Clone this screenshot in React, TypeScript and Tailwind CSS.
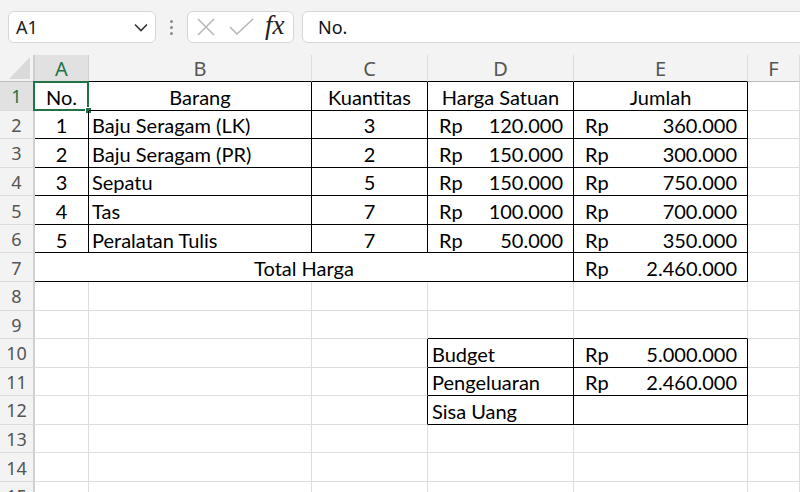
import React from "react";

const cellFont = { fontFamily: "Lato, 'Liberation Sans', sans-serif" };

type CellProps = {
  r?: boolean;
  b?: boolean;
  className?: string;
  children?: React.ReactNode;
  span4?: boolean;
};

function Cell({ r, b, className = "", children, span4 }: CellProps) {
  return (
    <div
      className={
        "relative flex items-center border-r border-b text-[20px] leading-none text-black whitespace-nowrap overflow-visible pt-[2px] " +
        (r ? "border-r-black " : "border-r-[#dedede] ") +
        (b ? "border-b-black " : "border-b-[#dedede] ") +
        (span4 ? "col-span-4 " : "") +
        className
      }
      style={cellFont}
    >
      {children}
    </div>
  );
}

function Acc({ v }: { v: string }) {
  return (
    <div className="flex w-full items-center justify-between pl-[11px] pr-[10px]">
      <span>Rp</span>
      <span>{v}</span>
    </div>
  );
}

function RowHead({ n, sel }: { n: number; sel?: boolean }) {
  return (
    <div
      className={
        "flex items-center justify-center border-r-2 border-b border-r-[#cfcfcf] border-b-[#dcdcdc] text-[18px] leading-none pt-[1px] " +
        (sel ? "bg-[#e1e1e1] text-[#217346]" : "bg-[#f3f3f3] text-[#555]")
      }
      style={{ fontFamily: "'Noto Sans', 'Open Sans', sans-serif" }}
    >
      {n}
    </div>
  );
}

function ColHead({ l, sel, dark }: { l: string; sel?: boolean; dark?: boolean }) {
  return (
    <div
      className={
        "flex items-center justify-center border-r border-b text-[20px] leading-none pt-[1px] " +
        (dark ? "border-b-black " : "border-b-[#bdbdbd] ") +
        (sel ? "bg-[#e1e1e1] text-[#217346] border-r-[#d0d0d0]" : "bg-[#f3f3f3] text-[#555] border-r-[#dcdcdc]")
      }
      style={{ fontFamily: "'Noto Sans', 'Open Sans', sans-serif" }}
    >
      {l}
    </div>
  );
}

const data = [
  ["1", "Baju Seragam (LK)", "3", "120.000", "360.000"],
  ["2", "Baju Seragam (PR)", "2", "150.000", "300.000"],
  ["3", "Sepatu", "5", "150.000", "750.000"],
  ["4", "Tas", "7", "100.000", "700.000"],
  ["5", "Peralatan Tulis", "7", "50.000", "350.000"],
];

export default function App() {
  return (
    <div className="w-[800px] h-[492px] overflow-hidden bg-white">
      {/* Formula bar */}
      <div className="flex h-[55px] items-start bg-[#f3f3f3] pt-[11px] pl-[8px]">
        <div className="flex h-[32px] w-[148px] items-center justify-between rounded-[6px] border border-[#d6d6d6] bg-white pl-[7px] pr-[7px]">
          <span className="text-[18px] text-[#222]" style={{ fontFamily: "'Noto Sans', sans-serif" }}>
            A1
          </span>
          <svg width="14" height="9" viewBox="0 0 14 9" fill="none">
            <path d="M1 1.5 L7 7.5 L13 1.5" stroke="#333" strokeWidth="1.6" />
          </svg>
        </div>
        <div className="flex h-[32px] w-[31px] items-center justify-center">
          <div className="flex flex-col gap-[3px]">
            <div className="h-[3px] w-[3px] rounded-full bg-[#8a8a8a]" />
            <div className="h-[3px] w-[3px] rounded-full bg-[#8a8a8a]" />
            <div className="h-[3px] w-[3px] rounded-full bg-[#8a8a8a]" />
          </div>
        </div>
        <div className="flex h-[32px] w-[107px] items-center rounded-[6px] border border-[#d6d6d6] bg-white pl-[8px]">
          <svg width="20" height="20" viewBox="0 0 20 20" fill="none">
            <path d="M2 2 L18 18 M18 2 L2 18" stroke="#b5b5b5" strokeWidth="1.5" />
          </svg>
          <svg className="ml-[13px]" width="25" height="20" viewBox="0 0 25 20" fill="none">
            <path d="M1 10 L8 17 L24 2" stroke="#b5b5b5" strokeWidth="1.5" />
          </svg>
          <span
            className="ml-[11px] text-[27px] italic leading-none text-[#222] -mt-[3px]"
            style={{ fontFamily: "'Liberation Serif', serif" }}
          >
            fx
          </span>
        </div>
        <div className="ml-[8px] -mr-[10px] flex h-[32px] flex-1 items-center rounded-[6px] border border-[#d6d6d6] bg-white pl-[15px]">
          <span className="text-[18px] text-[#111]" style={{ fontFamily: "'Noto Sans', sans-serif" }}>
            No.
          </span>
        </div>
      </div>

      {/* Sheet grid */}
      <div className="grid grid-cols-[35px_54px_223px_116px_146px_174px_1fr] grid-rows-[27px_repeat(15,28.57px)]">
        <div className="flex items-end justify-end border-r-2 border-b border-r-[#cfcfcf] border-b-[#bdbdbd] bg-[#f3f3f3] pb-[2px] pr-[3px]">
          <svg width="21" height="22" viewBox="0 0 21 22">
            <path d="M21 0 L21 22 L0 22 Z" fill="#dadada" />
          </svg>
        </div>
        <ColHead l="A" sel dark />
        <ColHead l="B" dark />
        <ColHead l="C" dark />
        <ColHead l="D" dark />
        <ColHead l="E" dark />
        <ColHead l="F" />

        {/* Row 1 */}
        <RowHead n={1} sel />
        <Cell r b className="justify-center">
          No.
          <div className="pointer-events-none absolute -left-[2px] -top-[1px] -right-[1px] -bottom-[1px] border-2 border-[#217346]" />
          <div className="absolute -bottom-[4px] -right-[4px] h-[7px] w-[7px] border border-white bg-[#217346]" />
        </Cell>
        <Cell r b className="justify-center">Barang</Cell>
        <Cell r b className="justify-center">Kuantitas</Cell>
        <Cell r b className="justify-center">Harga Satuan</Cell>
        <Cell r b className="justify-center">Jumlah</Cell>
        <Cell />

        {data.map((d, i) => (
          <React.Fragment key={i}>
            <RowHead n={i + 2} />
            <Cell r b className="justify-center">{d[0]}</Cell>
            <Cell r b className="pl-[3px]">{d[1]}</Cell>
            <Cell r b className="justify-center">{d[2]}</Cell>
            <Cell r b>
              <Acc v={d[3]} />
            </Cell>
            <Cell r b>
              <Acc v={d[4]} />
            </Cell>
            <Cell />
          </React.Fragment>
        ))}

        {/* Row 7 */}
        <RowHead n={7} />
        <Cell span4 r b className="justify-center">Total Harga</Cell>
        <Cell r b>
          <Acc v="2.460.000" />
        </Cell>
        <Cell />

        {/* Row 8 */}
        <RowHead n={8} />
        <Cell />
        <Cell />
        <Cell />
        <Cell />
        <Cell />
        <Cell />

        {/* Row 9 */}
        <RowHead n={9} />
        <Cell />
        <Cell />
        <Cell />
        <Cell b />
        <Cell b />
        <Cell />

        {/* Row 10 */}
        <RowHead n={10} />
        <Cell />
        <Cell />
        <Cell r />
        <Cell r b className="pl-[4px]">Budget</Cell>
        <Cell r b>
          <Acc v="5.000.000" />
        </Cell>
        <Cell />

        {/* Row 11 */}
        <RowHead n={11} />
        <Cell />
        <Cell />
        <Cell r />
        <Cell r b className="pl-[4px]">Pengeluaran</Cell>
        <Cell r b>
          <Acc v="2.460.000" />
        </Cell>
        <Cell />

        {/* Row 12 */}
        <RowHead n={12} />
        <Cell />
        <Cell />
        <Cell r />
        <Cell r b className="pl-[4px]">Sisa Uang</Cell>
        <Cell r b />
        <Cell />

        {[13, 14, 15].map((n) => (
          <React.Fragment key={n}>
            <RowHead n={n} />
            <Cell />
            <Cell />
            <Cell />
            <Cell />
            <Cell />
            <Cell />
          </React.Fragment>
        ))}
      </div>
    </div>
  );
}
